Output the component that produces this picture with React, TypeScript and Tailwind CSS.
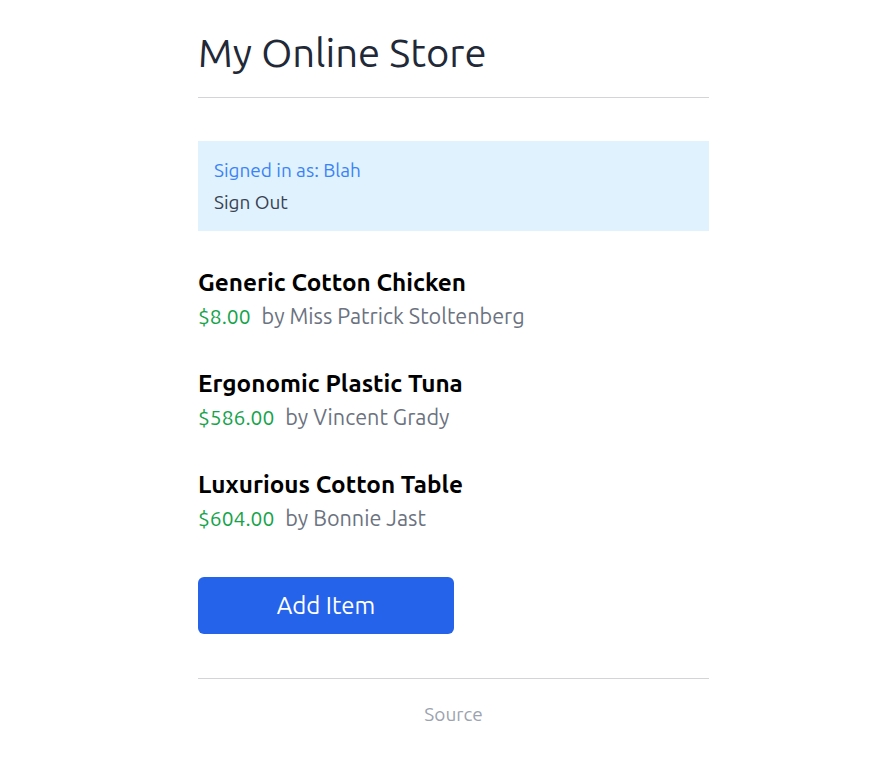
const ITEMS = [
  { name: 'Generic Cotton Chicken', price: '$8.00', seller: 'Miss Patrick Stoltenberg' },
  { name: 'Ergonomic Plastic Tuna', price: '$586.00', seller: 'Vincent Grady' },
  { name: 'Luxurious Cotton Table', price: '$604.00', seller: 'Bonnie Jast' },
]

export default function App() {
  return (
    <div className="min-h-screen bg-white font-['Ubuntu','Noto_Sans',sans-serif]">
      <div className="ml-[198px] w-[511px] pt-[28px]">
        <h1 className="text-[40px] leading-[50px] text-[#1f2937] pb-[19px] border-b border-[#d4d4d8]">
          My Online Store
        </h1>

        <div className="mt-[43px] bg-[#e0f2fe] px-4 pt-[17px] h-[90px]">
          <div className="text-[19px] leading-[24px] text-[#3b82f6]">Signed in as: Blah</div>
          <div className="mt-[8px] text-[19px] leading-[24px] text-[#374151]">Sign Out</div>
        </div>

        <div className="mt-[36px] flex flex-col gap-[38px]">
          {ITEMS.map((item) => (
            <div key={item.name}>
              <div className="text-[24.3px] leading-[30px] font-bold text-black">{item.name}</div>
              <div className="mt-[5px] text-[21px] leading-[28px]">
                <span className="text-[#16a34a]">{item.price}</span>
                <span className="ml-[11px] text-[21.6px] text-[#6b7280]">by {item.seller}</span>
              </div>
            </div>
          ))}
        </div>

        <button className="mt-[45px] w-[256px] h-[57px] rounded-md bg-[#2563eb] text-white text-2xl">
          Add Item
        </button>

        <div className="mt-[44px] border-t border-[#d4d4d8] pt-[22px] pb-[30px] text-center">
          <a className="text-[19px] leading-[26px] text-[#9ca3af]">Source</a>
        </div>
      </div>
    </div>
  )
}
